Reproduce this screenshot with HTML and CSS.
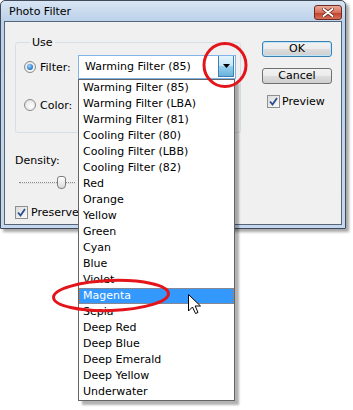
FILE: index.html
```html
<!DOCTYPE html>
<html lang="en">
<head>
    <meta charset="UTF-8">
    <title>Photo Filter</title>
    <link rel="stylesheet" href="styles.css">
</head>
<body>
    <div class="window">
        <div class="titlebar">
            <span class="title">Photo Filter</span>
            <span class="close-btn">
                <svg width="12" height="9" viewBox="0 0 12 9">
                    <path d="M1.5 1 L10.5 8 M10.5 1 L1.5 8" stroke="#5a1c14" stroke-width="3.4" stroke-linecap="round"/>
                    <path d="M1.5 1 L10.5 8 M10.5 1 L1.5 8" stroke="#fff" stroke-width="2" stroke-linecap="round"/>
                </svg>
            </span>
        </div>
        <div class="client">
            <div class="main">
                <fieldset class="group">
                    <legend>Use</legend>
                    <div class="row">
                        <span class="radio checked"></span>
                        <span class="row-label">Filter:</span>
                        <div class="combo">
                            <span class="combo-text">Warming Filter (85)</span>
                            <span class="combo-btn">
                                <svg width="7" height="4" viewBox="0 0 7 4"><path d="M0 0 H7 L3.5 4 Z" fill="#000"/></svg>
                            </span>
                            <ul class="list">
                                <li>Warming Filter (85)</li>
                                <li>Warming Filter (LBA)</li>
                                <li>Warming Filter (81)</li>
                                <li>Cooling Filter (80)</li>
                                <li>Cooling Filter (LBB)</li>
                                <li>Cooling Filter (82)</li>
                                <li>Red</li>
                                <li>Orange</li>
                                <li>Yellow</li>
                                <li>Green</li>
                                <li>Cyan</li>
                                <li>Blue</li>
                                <li>Violet</li>
                                <li class="selected">Magenta</li>
                                <li>Sepia</li>
                                <li>Deep Red</li>
                                <li>Deep Blue</li>
                                <li>Deep Emerald</li>
                                <li>Deep Yellow</li>
                                <li>Underwater</li>
                            </ul>
                        </div>
                    </div>
                    <div class="row second">
                        <span class="radio"></span>
                        <span class="row-label">Color:</span>
                        <span class="swatch"></span>
                    </div>
                </fieldset>
                <div class="density-label">Density:</div>
                <div class="slider">
                    <span class="track"></span>
                    <span class="thumb"></span>
                </div>
                <div class="check-row preserve">
                    <span class="checkbox">
                        <svg width="9" height="9" viewBox="0 0 9 9"><path d="M1 4.5 L3.5 7.5 L8 1" fill="none" stroke="#2a4f8c" stroke-width="1.8"/></svg>
                    </span>
                    <span class="cut-label">Preserve Luminosity</span>
                </div>
            </div>
            <div class="side">
                <div class="btn default">OK</div>
                <div class="btn">Cancel</div>
                <div class="check-row preview">
                    <span class="checkbox">
                        <svg width="9" height="9" viewBox="0 0 9 9"><path d="M1 4.5 L3.5 7.5 L8 1" fill="none" stroke="#2a4f8c" stroke-width="1.8"/></svg>
                    </span>
                    <span>Preview</span>
                </div>
            </div>
        </div>
    </div>

    <svg class="marks" width="353" height="410" viewBox="0 0 353 410">
        <ellipse cx="225" cy="65" rx="21" ry="21.5" fill="none" stroke="#e3151a" stroke-width="3"/>
        <ellipse cx="111" cy="295.5" rx="57.5" ry="15" transform="rotate(-2 111 295.5)" fill="none" stroke="#e3151a" stroke-width="3"/>
        <path d="M188.5 294.5 V311 L192.5 307 L195.5 313.5 L198 312.5 L195.2 306 H200.5 Z" fill="#fff" stroke="#000" stroke-width="1" stroke-linejoin="round"/>
    </svg>
</body>
</html>
```

FILE: styles.css
```css
body {
    margin: 0;
    background: #fff;
    font-family: "DejaVu Sans", Verdana, sans-serif;
    font-size: 11px;
    color: #000;
    position: relative;
    width: 353px;
    height: 410px;
    overflow: hidden;
}

.window {
    width: 346px;
    height: 229px;
    box-sizing: border-box;
    border: 1px solid #3f4b5a;
    border-radius: 5px 5px 0 0;
    background: linear-gradient(#d8e5f3, #bcd1ea 20px, #c4d7ec);
    padding: 0 3px 3px;
    display: flex;
    flex-direction: column;
    box-shadow: 3px 3px 3px rgba(0, 0, 0, 0.35);
}

.titlebar {
    height: 20px;
    display: flex;
    align-items: center;
    justify-content: space-between;
    padding-left: 5px;
    flex-shrink: 0;
}

.title {
    font-size: 11px;
    line-height: 13px;
}

.close-btn {
    width: 28px;
    height: 15px;
    box-sizing: border-box;
    margin-top: 2px;
    border: 1px solid #6e2a22;
    border-radius: 3px;
    background: linear-gradient(#eaa99b, #d8705c 50%, #c0402a 51%, #d4705a);
    display: flex;
    align-items: center;
    justify-content: center;
}

.client {
    flex: 1;
    border: 1px solid #56667a;
    background: #f0f0f0;
    display: flex;
    padding-left: 10px;
}

/* left column */
.main {
    width: 226px;
}

.group {
    margin: 14px 0 0;
    padding: 6px 3px 0 8px;
    border: 1px solid #d5dfe5;
    border-radius: 3px;
    height: 97px;
    box-sizing: border-box;
    min-width: 0;
}

.group legend {
    padding: 0 2px;
    margin-left: 6px;
    line-height: 13px;
}

.row {
    display: flex;
    align-items: center;
    height: 24px;
}

.row.second {
    margin-top: 14px;
}

.radio {
    width: 12px;
    height: 12px;
    box-sizing: border-box;
    border: 1px solid #8a8a8a;
    border-radius: 50%;
    background: radial-gradient(circle at 60% 65%, #ffffff, #dcdcdc);
    margin-right: 4px;
    display: flex;
    align-items: center;
    justify-content: center;
    flex-shrink: 0;
}

.radio.checked::after {
    content: "";
    width: 6px;
    height: 6px;
    border-radius: 50%;
    background: radial-gradient(circle at 40% 35%, #9fd8ff, #2f7fd0 60%, #1d4f94);
}

.row-label {
    width: 38px;
}

.combo {
    position: relative;
    width: 158px;
    height: 24px;
    box-sizing: border-box;
    border: 1px solid #7eb4ea;
    background: #fff;
    display: flex;
    align-items: stretch;
    padding: 0 1px 1px 6px;
}

.combo-text {
    flex: 1;
    line-height: 22px;
}

.combo-btn {
    width: 16px;
    box-sizing: border-box;
    border: 1px solid #3c7fb1;
    border-top: none;
    background: linear-gradient(#e5f4fc, #c4e5f6 50%, #98d1ef 51%, #68b3db);
    display: flex;
    align-items: center;
    justify-content: center;
}

.list {
    position: absolute;
    top: 23px;
    left: -1px;
    width: 157px;
    margin: 0;
    padding: 0;
    list-style: none;
    box-sizing: border-box;
    border: 1px solid #646464;
    background: #fff;
    box-shadow: 4px 4px 2px rgba(0, 0, 0, 0.3);
    z-index: 5;
}

.list li {
    height: 16px;
    line-height: 16px;
    padding-left: 4px;
    white-space: nowrap;
}

.list li.selected {
    background: #3399ff;
    color: #fff;
    outline: 1px dotted #d8762a;
    outline-offset: -1px;
}

.swatch {
    width: 56px;
    height: 20px;
    background: #ec8a00;
}

.density-label {
    margin-top: 21px;
    line-height: 13px;
}

.slider {
    margin: 9px 0 0 4px;
    width: 56px;
    height: 13px;
    display: grid;
    align-items: center;
}

.slider .track,
.slider .thumb {
    grid-area: 1 / 1;
}

.track {
    height: 0;
    border-top: 1px dotted #8a8a8a;
    border-bottom: 1px solid #e2e2e2;
}

.thumb {
    width: 9px;
    height: 13px;
    box-sizing: border-box;
    margin-left: 38px;
    border: 1px solid #7c7c7c;
    border-radius: 3px 3px 4px 4px;
    background: linear-gradient(#ffffff, #dadada);
}

.check-row {
    display: flex;
    align-items: center;
    height: 13px;
    white-space: nowrap;
}

.check-row.preserve {
    margin-top: 17px;
    gap: 3px;
}

/* the open list hides the rest of this label */
.cut-label {
    width: 47px;
    overflow: hidden;
}

.checkbox {
    width: 13px;
    height: 13px;
    box-sizing: border-box;
    border: 1px solid #8f8f8f;
    background: linear-gradient(135deg, #dcdcdc, #fafafa);
    display: flex;
    align-items: center;
    justify-content: center;
    flex-shrink: 0;
}

/* right column */
.side {
    margin-left: 21px;
    padding-top: 19px;
    width: 70px;
}

.btn {
    height: 16px;
    box-sizing: border-box;
    border: 1px solid #707070;
    border-radius: 3px;
    background: linear-gradient(#f2f2f2, #ebebeb 50%, #dddddd 51%, #cfcfcf);
    text-align: center;
    line-height: 14px;
    margin-bottom: 11px;
}

.btn.default {
    border-color: #3c7fb1;
    box-shadow: inset 0 0 0 1px #bde6fd;
}

.check-row.preview {
    margin: 8px 0 0 5px;
    gap: 2px;
}

.marks {
    position: absolute;
    top: 0;
    left: 0;
    pointer-events: none;
    z-index: 10;
}
```
